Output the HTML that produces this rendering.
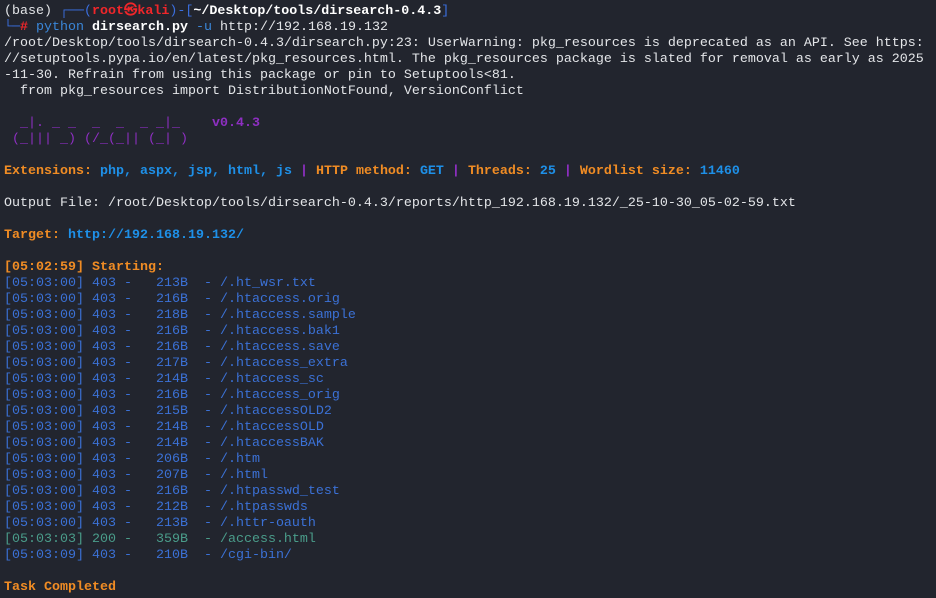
<!DOCTYPE html>
<html><head><meta charset="utf-8">
<style>
html,body{margin:0;padding:0;background:#22252e;width:936px;height:598px;overflow:hidden}
pre{margin:0;padding:4px 0 0 4px;font-family:"Liberation Mono",monospace;font-size:13.33px;line-height:16px;color:#e3e5e8;white-space:pre}
.b{font-weight:bold}
.r{color:#f0262a;font-weight:bold}
.bl{color:#3b6fe0}
.cy{color:#3a86d8}
.o{color:#f08c24;font-weight:bold}
.v{color:#1e90e8;font-weight:bold}
.p{color:#8e2fc2;font-weight:bold}
.pb{color:#8e2fc2}
.e{color:#3b71d6}
.g{color:#4a9c8a}
.w{color:#ffffff;font-weight:bold}
</style></head><body>
<pre>(base) <span class="bl">┌──(</span><span class="r">root㉿kali</span><span class="bl">)-[</span><span class="w">~/Desktop/tools/dirsearch-0.4.3</span><span class="bl">]</span>
<span class="bl">└─</span><span class="r">#</span> <span class="cy">python</span> <span class="w">dirsearch.py</span> <span class="cy">-u</span> http://192.168.19.132
/root/Desktop/tools/dirsearch-0.4.3/dirsearch.py:23: UserWarning: pkg_resources is deprecated as an API. See https:
//setuptools.pypa.io/en/latest/pkg_resources.html. The pkg_resources package is slated for removal as early as 2025
-11-30. Refrain from using this package or pin to Setuptools&lt;81.
  from pkg_resources import DistributionNotFound, VersionConflict

<span class="pb">  _|. _ _  _  _  _ _|_    </span><span class="p">v0.4.3</span>
<span class="pb"> (_||| _) (/_(_|| (_| )</span>

<span class="o">Extensions: </span><span class="v">php, aspx, jsp, html, js</span><span class="p"> | </span><span class="o">HTTP method: </span><span class="v">GET</span><span class="p"> | </span><span class="o">Threads: </span><span class="v">25</span><span class="p"> | </span><span class="o">Wordlist size: </span><span class="v">11460</span>

Output File: /root/Desktop/tools/dirsearch-0.4.3/reports/http_192.168.19.132/_25-10-30_05-02-59.txt

<span class="o">Target: </span><span class="v">http://192.168.19.132/</span>

<span class="o">[05:02:59] Starting: </span>
<span class="e">[05:03:00] 403 -   213B  - /.ht_wsr.txt
[05:03:00] 403 -   216B  - /.htaccess.orig
[05:03:00] 403 -   218B  - /.htaccess.sample
[05:03:00] 403 -   216B  - /.htaccess.bak1
[05:03:00] 403 -   216B  - /.htaccess.save
[05:03:00] 403 -   217B  - /.htaccess_extra
[05:03:00] 403 -   214B  - /.htaccess_sc
[05:03:00] 403 -   216B  - /.htaccess_orig
[05:03:00] 403 -   215B  - /.htaccessOLD2
[05:03:00] 403 -   214B  - /.htaccessOLD
[05:03:00] 403 -   214B  - /.htaccessBAK
[05:03:00] 403 -   206B  - /.htm
[05:03:00] 403 -   207B  - /.html
[05:03:00] 403 -   216B  - /.htpasswd_test
[05:03:00] 403 -   212B  - /.htpasswds
[05:03:00] 403 -   213B  - /.httr-oauth</span>
<span class="g">[05:03:03] 200 -   359B  - /access.html</span>
<span class="e">[05:03:09] 403 -   210B  - /cgi-bin/</span>

<span class="o">Task Completed</span>
</pre>
</body></html>
